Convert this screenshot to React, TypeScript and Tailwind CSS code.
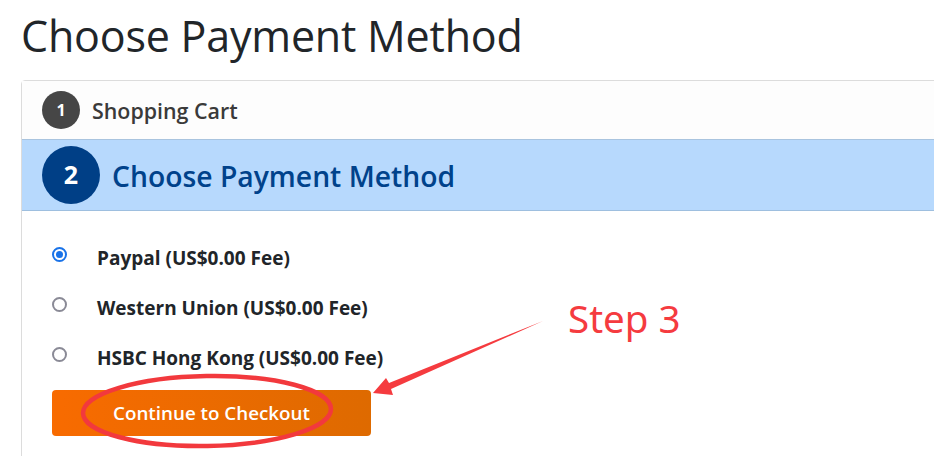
import React from "react";

const font = { fontFamily: '"Open Sans", "Noto Sans", Arial, sans-serif' };

function Radio({ checked }: { checked?: boolean }) {
  return checked ? (
    <span className="w-[15px] h-[15px] -mt-[7px] rounded-full border-[2px] border-[#1a73e8] flex items-center justify-center bg-white">
      <span className="w-[7px] h-[7px] rounded-full bg-[#1a73e8]" />
    </span>
  ) : (
    <span className="w-[15px] h-[15px] -mt-[7px] rounded-full border-[2px] border-[#8a8a96] bg-white" />
  );
}

export default function App() {
  const options = [
    { label: "Paypal (US$0.00 Fee)", checked: true },
    { label: "Western Union (US$0.00 Fee)" },
    { label: "HSBC Hong Kong (US$0.00 Fee)" },
  ];
  return (
    <div className="relative w-[934px] h-[456px] overflow-hidden bg-white" style={font}>
      <h1 className="pl-[21px] pt-[8px] h-[80px] text-[43px] leading-[56px] text-[#212529] tracking-[-0.2px]">
        Choose Payment Method
      </h1>
      <div className="ml-[21px] w-[960px] border border-[#dcdcdc] rounded-tl-[4px] h-[400px]">
        <div className="h-[59px] bg-[#fdfdfd] border-b border-[#a9c4df] flex items-center pl-[20px] gap-[12px]">
          <span className="w-[38px] h-[38px] rounded-full bg-[#464646] text-white text-[16px] font-bold flex items-center justify-center">
            1
          </span>
          <span className="text-[21.4px] text-[#3a3a3a] font-semibold pt-[2px]">Shopping Cart</span>
        </div>
        <div className="h-[71px] bg-[#b7d9fd] border-b border-[#9ebfdf] flex items-center pl-[20px] gap-[12px]">
          <span className="w-[58px] h-[58px] rounded-full bg-[#003f86] text-white text-[25px] font-bold flex items-center justify-center">
            2
          </span>
          <span className="text-[28.3px] text-[#00428b] font-semibold pt-[2px]">Choose Payment Method</span>
        </div>
        <div className="pl-[30px] pt-[22px]">
          <div className="flex flex-col">
            {options.map((o) => (
              <div key={o.label} className="h-[50px] flex items-center">
                <Radio checked={o.checked} />
                <span className="ml-[30px] text-[19px] font-bold text-[#212529]">{o.label}</span>
              </div>
            ))}
          </div>
          <button
            className="mt-[7px] w-[319px] h-[46px] rounded-[4px] text-white text-[18.8px] font-semibold bg-gradient-to-r from-[#f86b00] to-[#de6a00]"
            style={font}
          >
            Continue to Checkout
          </button>
        </div>
      </div>
      <svg className="absolute left-0 top-0 pointer-events-none" width="934" height="456" viewBox="0 0 934 456">
        <ellipse cx="207" cy="411" rx="124" ry="35" fill="none" stroke="#f2393d" strokeWidth="4.5" transform="rotate(-1 207 411)" />
        <path d="M543 321 L389 383 L386 378 L373 393 L393 395 L391 389 Z" fill="#f53b3f" />
      </svg>
      <div
        className="absolute left-[568px] top-[292px] text-[38.5px] leading-[52px] text-[#f53b3f]"
        style={{ fontFamily: '"Noto Sans", "Open Sans", Arial, sans-serif' }}
      >
        Step 3
      </div>
    </div>
  );
}
